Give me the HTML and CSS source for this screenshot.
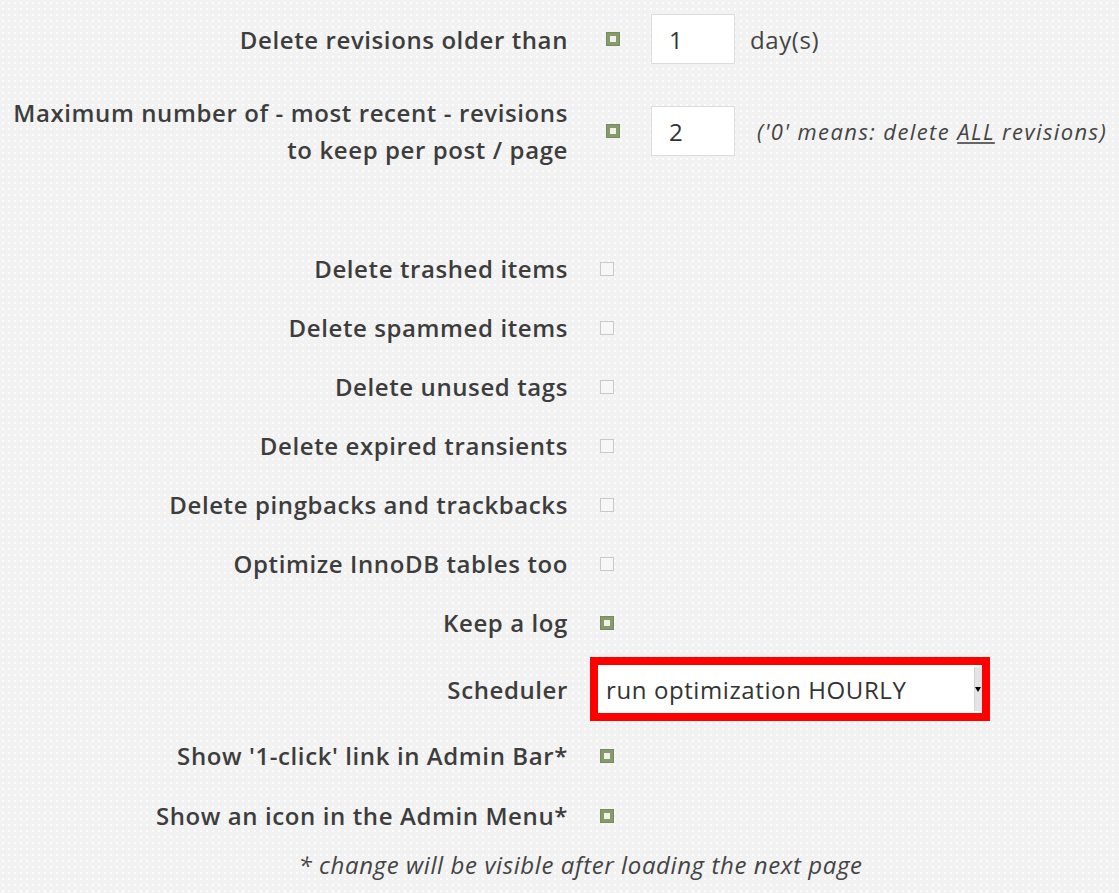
FILE: index.html
```html
<!DOCTYPE html>
<html>
  <head>
    <title>Optimizer settings</title>
    <link rel="stylesheet" href="styles.css">
  </head>
  <body>
    <div class="settings">
      <div class="row row-first">
        <div class="label">Delete revisions older than</div>
        <div class="value shift">
          <span class="cb on"></span>
          <input class="num" type="text" value="1">
          <span class="unit">day(s)</span>
        </div>
      </div>
      <div class="row row-second">
        <div class="label">Maximum number of - most recent - revisions<br>to keep per post / page</div>
        <div class="value shift">
          <span class="cb on"></span>
          <input class="num" type="text" value="2">
          <span class="note">('0' means: delete <u>ALL</u> revisions)</span>
        </div>
      </div>

      <div class="row gap-top">
        <div class="label">Delete trashed items</div>
        <div class="value"><span class="cb"></span></div>
      </div>
      <div class="row">
        <div class="label">Delete spammed items</div>
        <div class="value"><span class="cb"></span></div>
      </div>
      <div class="row">
        <div class="label">Delete unused tags</div>
        <div class="value"><span class="cb"></span></div>
      </div>
      <div class="row">
        <div class="label">Delete expired transients</div>
        <div class="value"><span class="cb"></span></div>
      </div>
      <div class="row">
        <div class="label">Delete pingbacks and trackbacks</div>
        <div class="value"><span class="cb"></span></div>
      </div>
      <div class="row">
        <div class="label">Optimize InnoDB tables too</div>
        <div class="value"><span class="cb"></span></div>
      </div>
      <div class="row">
        <div class="label">Keep a log</div>
        <div class="value"><span class="cb on"></span></div>
      </div>
      <div class="row row-sched">
        <div class="label">Scheduler</div>
        <div class="value">
          <div class="select">
            <span class="select-text">run optimization HOURLY</span>
            <span class="select-arrow"><i></i></span>
          </div>
        </div>
      </div>
      <div class="row">
        <div class="label">Show '1-click' link in Admin Bar*</div>
        <div class="value"><span class="cb on"></span></div>
      </div>
      <div class="row row-last">
        <div class="label">Show an icon in the Admin Menu*</div>
        <div class="value"><span class="cb on"></span></div>
      </div>
      <div class="footnote">* change will be visible after loading the next page</div>
    </div>
  </body>
</html>
```

FILE: styles.css
```css
body {
  margin: 0;
  background-color: #f2f2f2;
  background-image: radial-gradient(circle, #fcfcfc 1px, transparent 1.4px);
  background-size: 6px 6px;
  font-family: "Open Sans", "Liberation Sans", sans-serif;
  color: #3d3d3d;
  letter-spacing: 0.6px;
  width: 1119px;
  height: 893px;
  overflow: hidden;
}

.settings {
  display: flex;
  flex-direction: column;
}

.row {
  display: grid;
  grid-template-columns: 568px 1fr;
  column-gap: 32px;
  align-items: center;
  height: 59px;
}
.row-first {
  height: 78px;
}
.row-second {
  height: 106px;
}
.gap-top {
  margin-top: 55px;
}
.row-sched {
  height: 74px;
}
.row-last {
  height: 61px;
}

.label {
  text-align: right;
  font-size: 24px;
  font-weight: 600;
  line-height: 37px;
  white-space: nowrap;
}

.value {
  display: flex;
  align-items: center;
}
.value.shift {
  padding-left: 6px;
}

/* checkboxes */
.cb {
  display: inline-block;
  width: 12px;
  height: 12px;
  border: 1px solid #c9c9c9;
  background: #f7f7f7;
  position: relative;
}
.cb.on {
  background: #869b6b;
  border-color: #778b5d;
}
.cb.on::after {
  content: "";
  position: absolute;
  left: 3px;
  top: 3px;
  width: 6px;
  height: 6px;
  background: #eef2e8;
}

.num {
  margin-left: 31px;
  width: 84px;
  height: 50px;
  box-sizing: border-box;
  border: 1px solid #dcdcdc;
  background: #fff;
  font-family: "Open Sans", "Liberation Sans", sans-serif;
  font-size: 24px;
  color: #333;
  padding: 0 0 0 17px;
  outline: none;
}

.unit {
  margin-left: 15px;
  font-size: 24px;
  color: #444;
}

.note {
  margin-left: 22px;
  font-size: 22px;
  letter-spacing: 1.4px;
  font-style: italic;
  color: #444;
  white-space: nowrap;
}
.note u {
  text-decoration-color: #666;
}

/* scheduler select */
.select {
  margin-left: -10px;
  width: 400px;
  height: 64px;
  box-sizing: border-box;
  border: 8px solid #ff0000;
  background: #fff;
  display: flex;
  align-items: center;
  justify-content: space-between;
}
.select-text {
  padding-left: 8px;
  font-size: 24px;
  color: #333;
}
.select-arrow {
  align-self: stretch;
  width: 7px;
  margin: 2px 0;
  background: #e4e4e4;
  border-left: 1px solid #d4d4d4;
  position: relative;
}
.select-arrow i {
  position: absolute;
  left: 0;
  top: 20px;
  border-left: 3px solid transparent;
  border-right: 3px solid transparent;
  border-top: 5px solid #000;
}

.footnote {
  margin-top: 2px;
  text-align: center;
  padding-left: 42px;
  font-size: 24px;
  font-style: italic;
  color: #444;
}
```
